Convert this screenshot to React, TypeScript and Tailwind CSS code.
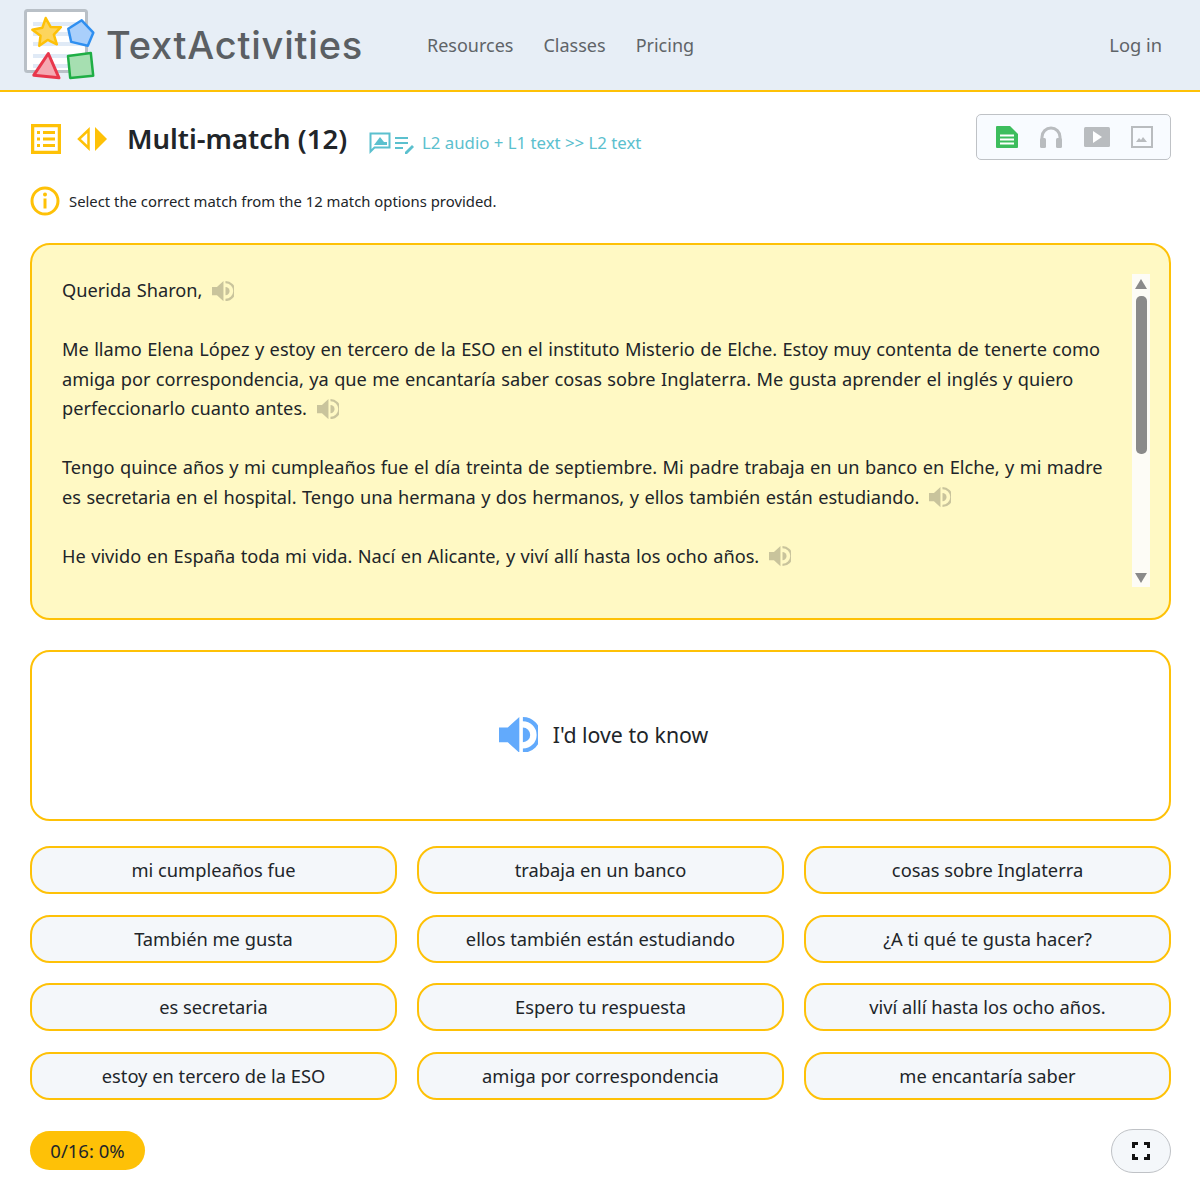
const font = { fontFamily: '"Noto Sans", "Open Sans", sans-serif' }

function Logo() {
  return (
    <svg width="76" height="76" viewBox="0 0 76 76" className="shrink-0">
      <rect x="3.500" y="3.500" width="61" height="61" fill="#fff" stroke="#b9c0c7" strokeWidth="3" rx="2" />
      <path d="M11 17h50M11 27h50M11 37h50M11 49h50M11 59h50" stroke="#e0eaf6" strokeWidth="4" />
      <path d="M25 11l4.100 9.300 10.200 1.100-7.600 6.800 2.100 9.900-8.800-5.100-8.800 5.100 2.100-9.900-7.600-6.800 10.200-1.100z" fill="#fdd55d" stroke="#fec107" strokeWidth="2.500" strokeLinejoin="round" transform="rotate(-5 25 26)" />
      <path d="M59.700 13.300L71.300 25.700 65.800 38.700 49.200 34.900 46.300 21.800z" fill="#a9cffb" stroke="#2f8ff0" strokeWidth="2.500" strokeLinejoin="round" />
      <path d="M26.300 46.500L37 70.800 11.800 68.200z" fill="#f5a9b2" stroke="#e8374c" strokeWidth="3" strokeLinejoin="round" />
      <path d="M46 49l22.800-3 2.400 22.700-23 2.300z" fill="#a6dfb1" stroke="#1fae45" strokeWidth="2.500" strokeLinejoin="round" />
    </svg>
  )
}

function Speaker({ color = '#c9c49c', size = 22 }: { color?: string; size?: number }) {
  return (
    <svg width={size} height={(size * 22) / 24} viewBox="0 0 24 22" className="shrink-0">
      <path d="M0 6.500h5.400L12.500 0v22L5.400 15.500H0z" fill={color} />
      <path d="M14.700 6.500a4.500 4.500 0 0 1 0 9z" fill={color} />
      <path d="M14.700 1.300a9.700 9.700 0 0 1 0 19.400" fill="none" stroke={color} strokeWidth="2.500" />
    </svg>
  )
}

function ListIcon() {
  return (
    <svg width="30" height="30" viewBox="0 0 30 30" className="ml-[1px] shrink-0">
      <rect x="1.500" y="1.500" width="27" height="27" fill="none" stroke="#fec107" strokeWidth="3.500" />
      <path d="M6 8.500h3M12 8.500h12M6 15h3M12 15h12M6 21.500h3M12 21.500h12" stroke="#fec107" strokeWidth="3" />
    </svg>
  )
}

function Arrows() {
  return (
    <svg width="30" height="24" viewBox="0 0 30 24" className="shrink-0">
      <path d="M11.500 3v18L2 12z" fill="#fff" stroke="#fec107" strokeWidth="2.500" />
      <path d="M18 0l12 12-12 12z" fill="#fec107" />
    </svg>
  )
}

function ModeIcons() {
  return (
    <svg width="46" height="24" viewBox="0 0 46 24" className="shrink-0">
      <path d="M1.500 2.500h19v14h-15l-4 4z" fill="none" stroke="#5bc0ce" strokeWidth="2" />
      <path d="M5 14l6-8 4 5 3 0v3z" fill="#5bc0ce" />
      <path d="M26 7h13M26 12h13M26 17h8" stroke="#5bc0ce" strokeWidth="2" />
      <path d="M36 21l7-7 2 2-7 7h-2z" fill="#5bc0ce" />
    </svg>
  )
}

function MediaTabs() {
  return (
    <div className="flex h-[46px] w-[195px] items-center justify-between rounded-[5px] border border-[#bfc2c6] bg-[#f8fbff] pl-[19px] pr-[17px]">
      <svg width="22" height="22" viewBox="0 0 22 22">
        <path d="M0 1a1 1 0 0 1 1-1h13l8 8v13a1 1 0 0 1-1 1H1a1 1 0 0 1-1-1z" fill="#3dbd5d" />
        <path d="M4 9.500h14M4 13.500h14M4 17.500h14" stroke="#fff" strokeWidth="1.800" />
      </svg>
      <svg width="24" height="24" viewBox="0 0 24 24">
        <path d="M3 21v-9a9 9 0 0 1 18 0v9" fill="none" stroke="#b9bcbf" strokeWidth="3" />
        <rect x="1" y="13" width="6" height="10" rx="1.500" fill="#b9bcbf" />
        <rect x="17" y="13" width="6" height="10" rx="1.500" fill="#b9bcbf" />
      </svg>
      <svg width="26" height="20" viewBox="0 0 26 20">
        <rect width="26" height="20" rx="1.500" fill="#b9bcbf" />
        <path d="M9 4l9 6-9 6z" fill="#fff" />
      </svg>
      <svg width="22" height="22" viewBox="0 0 22 22">
        <rect x="1" y="1" width="20" height="20" fill="none" stroke="#b9bcbf" strokeWidth="2" />
        <path d="M5 16l3-4 2 2 2-3 4 5z" fill="#b9bcbf" />
      </svg>
    </div>
  )
}

function Scrollbar() {
  return (
    <div className="mt-[-1px] flex h-[313px] w-[18px] shrink-0 flex-col items-center bg-[#fdfcf6] pt-[5px]">
      <div className="h-0 w-0 border-x-[6px] border-b-[10px] border-x-transparent border-b-[#8a8a8a]" />
      <div className="mt-[7px] h-[158px] w-[11px] rounded-[5px] bg-[#8a8a8a]" />
      <div className="mt-auto mb-[4px] h-0 w-0 border-x-[6px] border-t-[10px] border-x-transparent border-t-[#8a8a8a]" />
    </div>
  )
}

const options = [
  'mi cumpleaños fue',
  'trabaja en un banco',
  'cosas sobre Inglaterra',
  'También me gusta',
  'ellos también están estudiando',
  '¿A ti qué te gusta hacer?',
  'es secretaria',
  'Espero tu respuesta',
  'viví allí hasta los ocho años.',
  'estoy en tercero de la ESO',
  'amiga por correspondencia',
  'me encantaría saber',
]

export default function App() {
  return (
    <div className="min-h-[1178px] overflow-hidden bg-white text-[#212529]" style={font}>
      <nav className="flex h-[92px] items-center border-b-2 border-[#fec107] bg-[#e7eef6] pl-[22px] pr-[38px]">
        <Logo />
        <span className="ml-[8px] w-[321px] text-[38px] font-medium leading-none tracking-[0.8px] text-[#5b5f63]" style={{ fontFamily: 'Inter, sans-serif' }}>
          TextActivities
        </span>
        <div className="flex gap-[30px] text-[18px] text-[#5f6468]">
          <span>Resources</span>
          <span>Classes</span>
          <span>Pricing</span>
        </div>
        <span className="ml-auto text-[18.300px] text-[#5f6468]">Log in</span>
      </nav>

      <main className="pl-[30px] pr-[29px]">
        <div className="mt-[23px] flex h-[47px] items-center">
          <ListIcon />
          <div className="ml-[16px]"><Arrows /></div>
          <h1 className="ml-[20px] text-[27.500px] font-semibold leading-none text-[#212529]">Multi-match (12)</h1>
          <div className="ml-[22px] mt-[8px]"><ModeIcons /></div>
          <span className="ml-[7px] mt-[8px] text-[16.800px] text-[#5bc0ce]">L2 audio + L1 text &gt;&gt; L2 text</span>
          <div className="ml-auto mt-[-4px]"><MediaTabs /></div>
        </div>

        <div className="mt-[24px] flex h-[30px] items-center">
          <svg width="30" height="30" viewBox="0 0 30 30" className="shrink-0">
            <circle cx="15" cy="15" r="13" fill="none" stroke="#fec107" strokeWidth="3" />
            <circle cx="15" cy="8.500" r="2" fill="#fec107" />
            <path d="M15 12.500v10" stroke="#fec107" strokeWidth="3" />
          </svg>
          <p className="ml-[9px] text-[14.850px]">Select the correct match from the 12 match options provided.</p>
        </div>

        <section className="mt-[27px] flex h-[377px] justify-between rounded-[20px] border-2 border-[#fec107] bg-[#fff9c4] pl-[30px] pr-[19px] pt-[30px]">
          <div className="mt-[1px] w-[1050px] text-[18.200px] leading-[29.500px] [word-spacing:0.7px]">
            <p className="flex items-center gap-[10px]">Querida Sharon, <Speaker /></p>
            <p className="mt-[29.500px]">
              Me llamo Elena López y estoy en tercero de la ESO en el instituto Misterio de Elche. Estoy muy contenta de tenerte como amiga por correspondencia, ya que me encantaría saber cosas sobre Inglaterra. Me gusta aprender el inglés y quiero perfeccionarlo cuanto antes.
              <span className="ml-[10px] inline-block align-[-4px]"><Speaker /></span>
            </p>
            <p className="mt-[29.500px]">
              Tengo quince años y mi cumpleaños fue el día treinta de septiembre. Mi padre trabaja en un banco en Elche, y mi madre es secretaria en el hospital. Tengo una hermana y dos hermanos, y ellos también están estudiando.
              <span className="ml-[10px] inline-block align-[-4px]"><Speaker /></span>
            </p>
            <p className="mt-[29.500px]">
              He vivido en España toda mi vida. Nací en Alicante, y viví allí hasta los ocho años.
              <span className="ml-[10px] inline-block align-[-4px]"><Speaker /></span>
            </p>
          </div>
          <Scrollbar />
        </section>

        <section className="mt-[30px] flex h-[171px] items-center justify-center gap-[15px] rounded-[20px] border-2 border-[#fec107] pb-[2px] pl-[6px]">
          <Speaker color="#62aafc" size={39} />
          <span className="text-[21.300px]">I'd love to know</span>
        </section>

        <div className="mt-[25px] grid grid-cols-3 gap-x-[20px] gap-y-[20.500px]">
          {options.map((o) => (
            <button key={o} className="h-[48px] rounded-[20px] border-2 border-[#fec107] bg-[#f4f7fa] text-[18.300px]">
              {o}
            </button>
          ))}
        </div>

        <div className="mt-[29px] flex items-center justify-between">
          <span className="flex h-[39px] w-[115px] items-center justify-center rounded-[20px] bg-[#fec107] text-[18.500px]">0/16: 0%</span>
          <button className="flex h-[44px] w-[60px] items-center justify-center rounded-[22px] border border-[#bfc2c6] bg-[#f4f7fa]">
            <svg width="18" height="18" viewBox="0 0 18 18">
              <path d="M1.500 6V1.500H6M12 1.500h4.500V6M16.500 12v4.500H12M6 16.500H1.500V12" fill="none" stroke="#111" strokeWidth="3" />
            </svg>
          </button>
        </div>
      </main>
    </div>
  )
}
